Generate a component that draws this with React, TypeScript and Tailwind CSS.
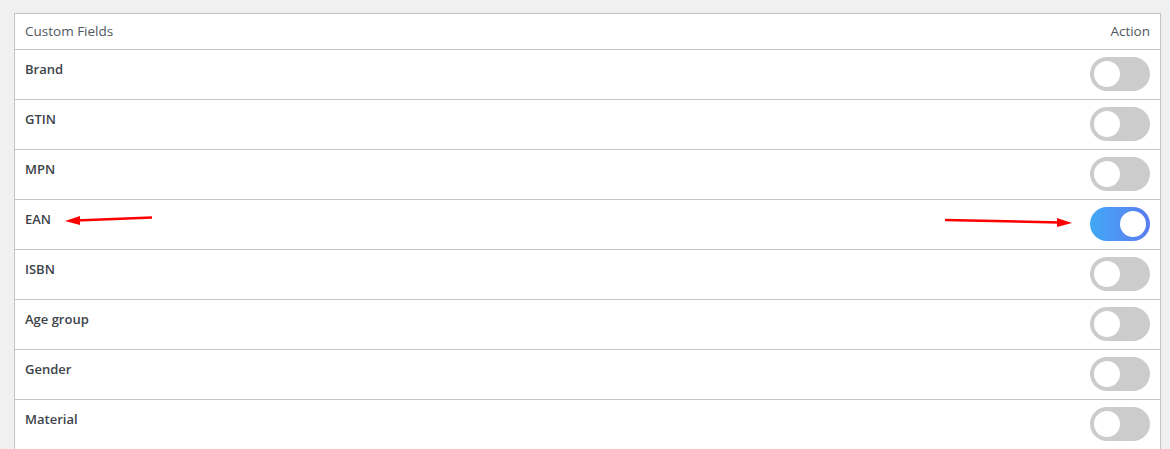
import React from "react";

const rows = [
  { name: "Brand", on: false },
  { name: "GTIN", on: false },
  { name: "MPN", on: false },
  { name: "EAN", on: true },
  { name: "ISBN", on: false },
  { name: "Age group", on: false },
  { name: "Gender", on: false },
  { name: "Material", on: false },
];

function Toggle({ on }: { on: boolean }) {
  return (
    <div
      className={
        "relative w-[60px] h-[34px] rounded-full mt-[7px] " +
        (on ? "bg-gradient-to-r from-[#3fa8f6] to-[#5a7cef]" : "bg-[#cccccc]")
      }
    >
      <div
        className={
          "absolute top-[4px] w-[26px] h-[26px] rounded-full bg-white " +
          (on ? "left-[30px]" : "left-[4px]")
        }
      />
    </div>
  );
}

export default function App() {
  return (
    <div
      className="relative w-[1170px] h-[449px] overflow-hidden bg-[#f0f0f0] pt-[13px] pl-[14px]"
      style={{ fontFamily: '"Open Sans", "Noto Sans", sans-serif' }}
    >
      <div className="w-[1147px] bg-white border border-[#c3c4c7] border-b-0">
        <div className="flex justify-between items-center h-[36px] px-[10px] border-b border-[#c3c4c7] text-[13.5px] text-[#50575e]">
          <span>Custom Fields</span>
          <span>Action</span>
        </div>
        {rows.map((r) => (
          <div
            key={r.name}
            className="flex justify-between items-start h-[50px] px-[10px] border-b border-[#c3c4c7]"
          >
            <span className="pt-[10px] leading-[18px] text-[13px] font-semibold text-[#3c434a]">
              {r.name}
            </span>
            <Toggle on={r.on} />
          </div>
        ))}
      </div>
      <svg
        className="absolute left-0 top-0 pointer-events-none"
        width="1170"
        height="449"
        viewBox="0 0 1170 449"
      >
        <line x1="152" y1="217.5" x2="76" y2="220.5" stroke="#ff0000" strokeWidth="2.5" />
        <polygon points="65,221 80,216 80,225" fill="#ff0000" />
        <line x1="945" y1="220" x2="1060" y2="222.5" stroke="#ff0000" strokeWidth="2.5" />
        <polygon points="1072,223 1057,218 1057,227" fill="#ff0000" />
      </svg>
    </div>
  );
}
